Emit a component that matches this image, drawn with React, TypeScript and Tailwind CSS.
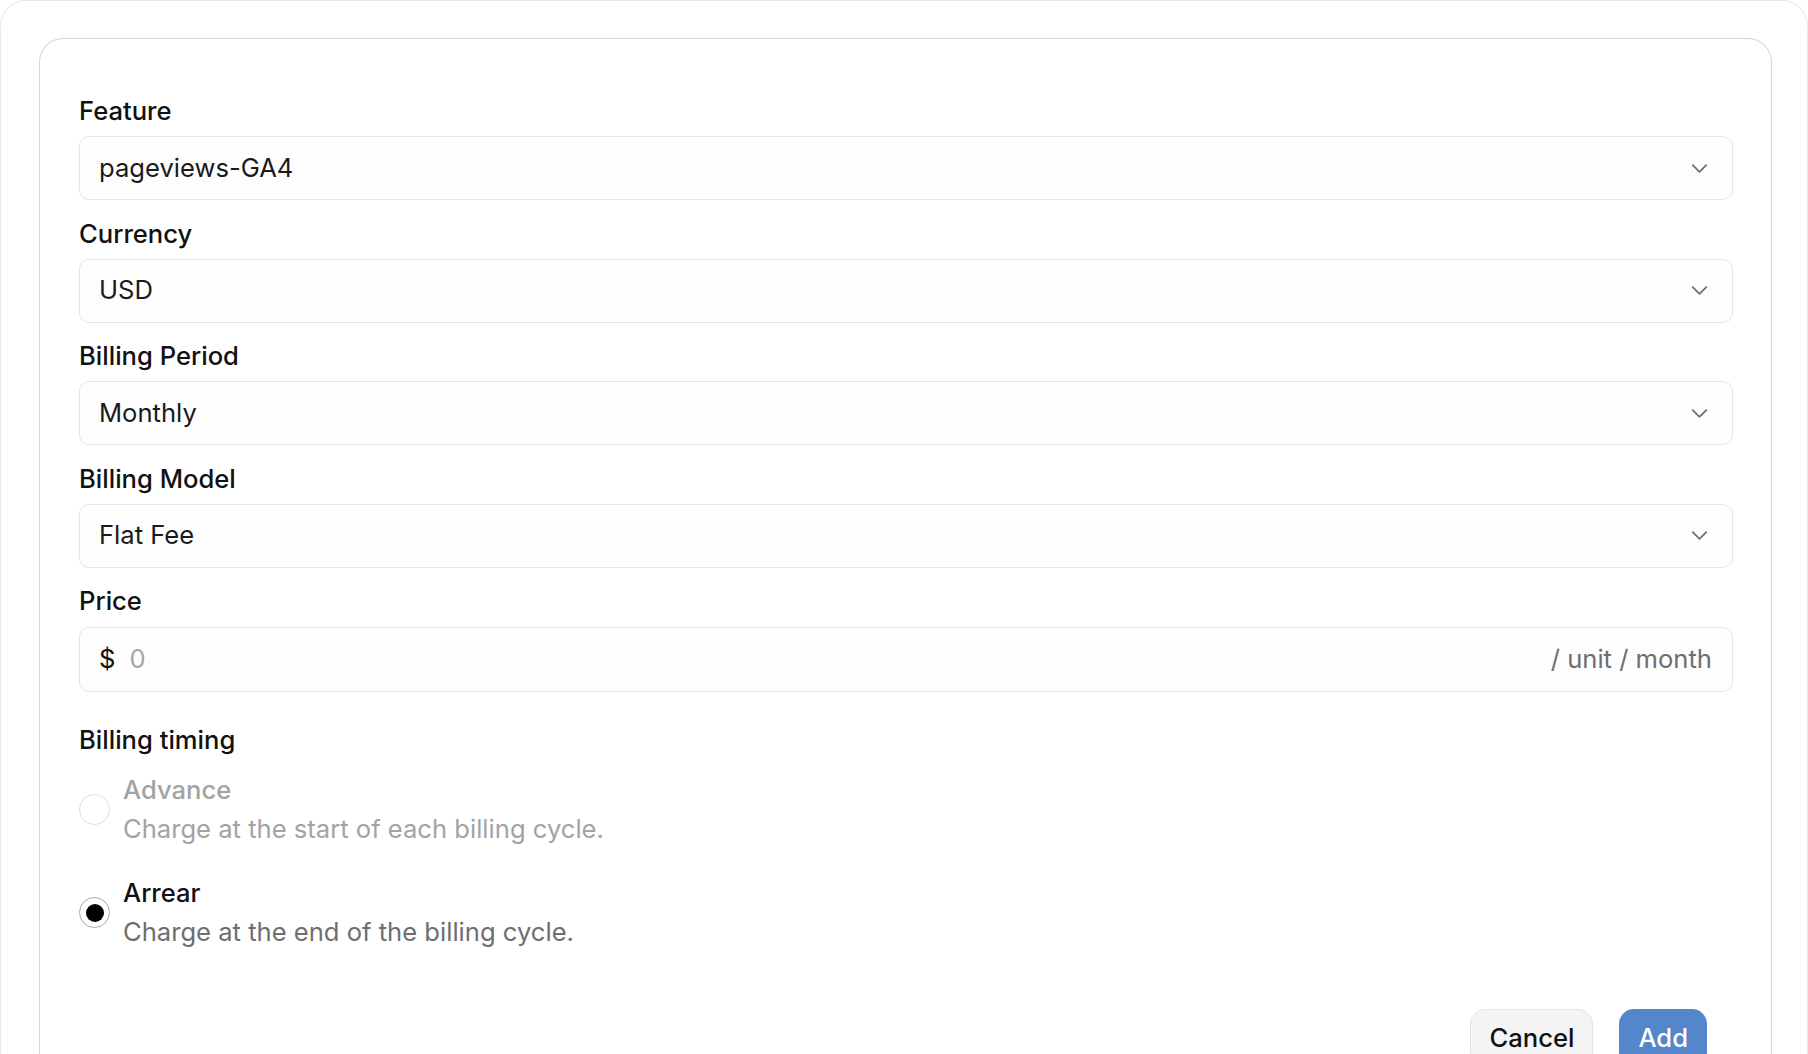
import { ChevronDown } from "lucide-react";

const selects = [
  { label: "Feature", value: "pageviews-GA4" },
  { label: "Currency", value: "USD" },
  { label: "Billing Period", value: "Monthly" },
  { label: "Billing Model", value: "Flat Fee" },
];

function Field({ label, value }: { label: string; value: string }) {
  return (
    <div className="mb-[16.5px]">
      <div className="h-[33px] leading-[33px] font-medium text-[#111111] mb-[9px]">{label}</div>
      <div className="h-[64px] flex items-center justify-between rounded-[10px] border border-[#e6e6e6] bg-[#fdfdfd] pl-[19px] pr-[19px] text-[#1a1a1a]">
        <span>{value}</span>
        <ChevronDown size={27} strokeWidth={1.6} className="text-[#707070]" />
      </div>
    </div>
  );
}

function Radio({ checked, disabled }: { checked?: boolean; disabled?: boolean }) {
  if (checked) {
    return (
      <div className="w-[31px] h-[31px] rounded-full border border-[#a8a8a8] bg-white flex items-center justify-center shrink-0">
        <div className="w-[18px] h-[18px] rounded-full bg-black" />
      </div>
    );
  }
  return (
    <div
      className={
        disabled
          ? "w-[31px] h-[31px] rounded-full border border-[#dedede] bg-white shrink-0"
          : "w-[31px] h-[31px] rounded-full border border-[#a8a8a8] bg-white shrink-0"
      }
    />
  );
}

export default function App() {
  return (
    <div className="h-[1054px] overflow-hidden bg-white [font-family:Inter,sans-serif] text-[25.6px]">
      <div className="min-h-[1100px] rounded-t-[26px] border border-b-0 border-[#e8e8e8] pl-[38px] pr-[35px] pt-[37px]">
        <div className="min-h-[1100px] rounded-t-[24px] border border-b-0 border-[#d6d6d6] pl-[39px] pr-[38px] pt-[55px]">
          {selects.map((s) => (
            <Field key={s.label} label={s.label} value={s.value} />
          ))}

          {/* Price */}
          <div className="h-[33px] leading-[33px] font-medium text-[#111111] mb-[10px]">Price</div>
          <div className="h-[65px] flex items-center rounded-[10px] border border-[#e6e6e6] bg-[#fdfdfd] pl-[19px] pr-[20px]">
            <span className="text-[#111111]">$</span>
            <span className="ml-[14px] text-[#a6a6a6] flex-1">0</span>
            <span className="text-[#6e6e6e]">/ unit / month</span>
          </div>

          {/* Billing timing */}
          <div className="mt-[31px] h-[33px] leading-[33px] font-medium text-[#111111]">Billing timing</div>

          <div className="mt-[17px] flex items-center gap-[13px]">
            <Radio disabled />
            <div>
              <div className="leading-[34px] font-medium text-[#a3a3a3]">Advance</div>
              <div className="mt-[5px] leading-[34px] text-[#a3a3a3]">Charge at the start of each billing cycle.</div>
            </div>
          </div>

          <div className="mt-[30px] flex items-center gap-[13px]">
            <Radio checked />
            <div>
              <div className="leading-[34px] font-medium text-[#111111]">Arrear</div>
              <div className="mt-[5px] leading-[34px] text-[#6e6e6e]">Charge at the end of the billing cycle.</div>
            </div>
          </div>

          <div className="mt-[60px] flex justify-end gap-[26px] pr-[26px]">
            <button className="h-[58px] px-[18px] rounded-[15px] border border-[#e3e3e3] bg-[#f4f4f4] font-medium text-[#111111]">
              Cancel
            </button>
            <button className="h-[58px] px-[19px] rounded-[15px] bg-[#5386ca] font-medium text-white">Add</button>
          </div>
        </div>
      </div>
    </div>
  );
}
